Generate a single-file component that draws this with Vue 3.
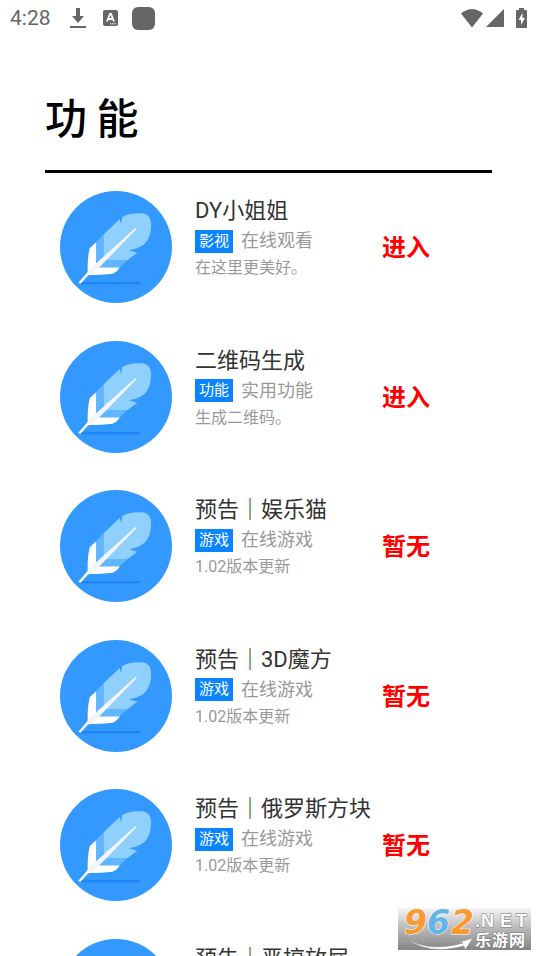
<script setup>
const items = [
  { title: 'DY小姐姐', tag: '影视', kind: '在线观看', desc: '在这里更美好。', action: '进入' },
  { title: '二维码生成', tag: '功能', kind: '实用功能', desc: '生成二维码。', action: '进入' },
  { title: '预告｜娱乐猫', tag: '游戏', kind: '在线游戏', desc: '1.02版本更新', action: '暂无' },
  { title: '预告｜3D魔方', tag: '游戏', kind: '在线游戏', desc: '1.02版本更新', action: '暂无' },
  { title: '预告｜俄罗斯方块', tag: '游戏', kind: '在线游戏', desc: '1.02版本更新', action: '暂无' },
  { title: '预告｜恶搞放屁', tag: '游戏', kind: '在线游戏', desc: '1.02版本更新', action: '暂无' },
]
</script>

<template>
  <div class="screen">
    <header class="status">
      <time class="clock">4:28</time>
      <svg class="download" viewBox="0 0 16 20" width="16" height="20" aria-hidden="true">
        <path d="M6 0h4v8h4l-6 7-6-7h4zM0 18h16v2H0z" />
      </svg>
      <svg class="input-mode" viewBox="0 0 15 16" width="15" height="16" aria-hidden="true">
        <rect width="15" height="16" rx="2" />
        <path d="M4 11.5 7 4h1l3 7.5M5 9h5" fill="none" stroke="#fff" stroke-width="1.8" />
        <path d="M7 13.8h6" stroke="#fff" stroke-width="1" stroke-dasharray="1.5 .7" />
      </svg>
      <span class="app-mark"></span>
      <svg class="wifi" viewBox="0 0 22 19" width="22" height="19" aria-hidden="true">
        <path d="M0 4.5Q11-4.5 22 4.5L11 18.500Z" />
      </svg>
      <svg class="signal" viewBox="0 0 18 18" width="18" height="18" aria-hidden="true">
        <path d="M18 0v18H0z" />
      </svg>
      <svg class="battery" viewBox="0 0 11 20" width="11" height="20" aria-hidden="true">
        <path d="M3 0h5v2h2q1 0 1 1v16q0 1-1 1H1q-1 0-1-1V3q0-1 1-1h2z" />
        <path d="M6.500 5 2.500 12h2.500v5l4-7H6.500z" fill="#fff" />
      </svg>
    </header>

    <main class="content">
      <h1>功 能</h1>
      <ul class="list">
        <li v-for="item in items" :key="item.title" class="row">
          <svg class="avatar" viewBox="30 20 336 336" aria-hidden="true">
            <circle cx="198" cy="188" r="168" fill="#3399ff" />
            <path d="M90 294H270v6H86z" fill="#1b84f5" />
            <path d="M119 192L139 173V249H209L207 253Q196 268 180 269Q145 273 113 272V240Q114 213 119 192Z" fill="#fff" />
            <path d="M139 173L161 150V228H232L209 249H139Z" fill="#62b6ff" />
            <path d="M161 150L209 104L213 119L217 98Q238 84 277 87Q302 91 303 116Q305 151 288 174Q275 191 237 198L262 205L232 228H161Z" fill="#90d0ff" />
            <path d="M256 131L260 134L141 256Q126 269 113 275L91 299L85 295L112 264Q118 251 133 242Z" fill="#f3f5f8" />
          </svg>
          <div class="info">
            <h2>{{ item.title }}</h2>
            <p class="meta"><span class="tag">{{ item.tag }}</span><span>{{ item.kind }}</span></p>
            <p class="desc">{{ item.desc }}</p>
          </div>
          <button type="button" class="action">{{ item.action }}</button>
        </li>
      </ul>
    </main>

    <svg class="watermark" viewBox="0 0 133 42" width="133" height="42" role="img" aria-label="962.NET 乐游网">
      <defs>
        <linearGradient id="plate" x1="0" y1="0" x2="0" y2="1">
          <stop offset="0" stop-color="#f4f4f4" />
          <stop offset=".5" stop-color="#b8b8b8" />
          <stop offset="1" stop-color="#858585" />
        </linearGradient>
      </defs>
      <rect width="133" height="42" fill="url(#plate)" />
      <g class="digits">
        <text x="6" y="26" fill="#f79a32">9</text>
        <text x="29" y="26" fill="#62b5e8">6</text>
        <text x="53" y="26" fill="#f79a32">2</text>
      </g>
      <path d="M6 29Q29 45 65 35L61 34L75 30L67 42L66 38Q29 48 6 29Z" fill="#fff" stroke="#888" stroke-width=".6" />
      <text class="domain" x="77 83 102 118" y="19">.NET</text>
      <text class="site" x="77 94 111" y="38">乐游网</text>
    </svg>
  </div>
</template>

<style>
body {
  background: #fff;
}
</style>

<style scoped>
.screen {
  position: relative;
  height: 100vh;
  overflow: hidden;
  background: #fff;
  font-family: Roboto, "Noto Sans CJK SC", sans-serif;
}
.status {
  display: flex;
  align-items: center;
  height: 36px;
  padding: 0 10px;
  color: #666;
  fill: #666;
}
.clock {
  font-size: 21px;
  line-height: 36px;
}
.download {
  margin-left: 19px;
}
.input-mode {
  margin-left: 17px;
}
.app-mark {
  width: 23px;
  height: 23px;
  margin-left: 14px;
  border-radius: 6px;
  background: #666;
}
.wifi {
  margin-left: auto;
}
.signal {
  margin-left: 3px;
}
.battery {
  margin-left: 12px;
}
.content {
  padding: 48px 45px 0;
}
h1 {
  margin: 0;
  padding-bottom: 22px;
  border-bottom: 3px solid #000;
  color: #000;
  font-family: "Noto Sans CJK SC", sans-serif;
  font-size: 42px;
  font-weight: 500;
  line-height: 64px;
}
.list {
  display: flex;
  flex-direction: column;
  gap: 7vw;
  margin: 0;
  padding: 18px 15px 0;
  list-style: none;
}
.row {
  display: flex;
  align-items: center;
  height: 112px;
}
.avatar {
  flex: none;
  width: 112px;
  height: 112px;
}
.info {
  flex: none;
  align-self: flex-start;
  width: 187px;
  margin-left: 23px;
  padding-top: 4px;
  white-space: nowrap;
}
h2 {
  margin: 0;
  color: #333;
  font-size: 22px;
  font-weight: 400;
  line-height: 32px;
}
p {
  margin: 0;
  color: #999;
}
.meta {
  display: flex;
  align-items: center;
  gap: 8px;
  font-size: 18px;
  line-height: 28px;
}
.tag {
  padding: 0 4px;
  background: #0a84ff;
  color: #fff;
  font-size: 15px;
  line-height: 23px;
}
.desc {
  font-size: 16px;
  line-height: 26px;
}
.action {
  margin: 0;
  padding: 0 0 2px;
  border: 0;
  background: none;
  color: #f00;
  font-family: "Noto Sans CJK SC", sans-serif;
  font-size: 24px;
  font-weight: 700;
  line-height: 36px;
}
.watermark {
  position: absolute;
  right: 6px;
  bottom: 6px;
}
.digits {
  font: italic bold 33px "DejaVu Sans", sans-serif;
  stroke: #fff;
  stroke-width: 1px;
  paint-order: stroke;
}
.domain,
.site {
  fill: #fff;
  stroke: #777;
  stroke-width: 1px;
  paint-order: stroke;
}
.domain {
  font: bold 18px "Liberation Sans", sans-serif;
}
.site {
  font: bold 16px "Noto Sans CJK SC", sans-serif;
}
</style>
